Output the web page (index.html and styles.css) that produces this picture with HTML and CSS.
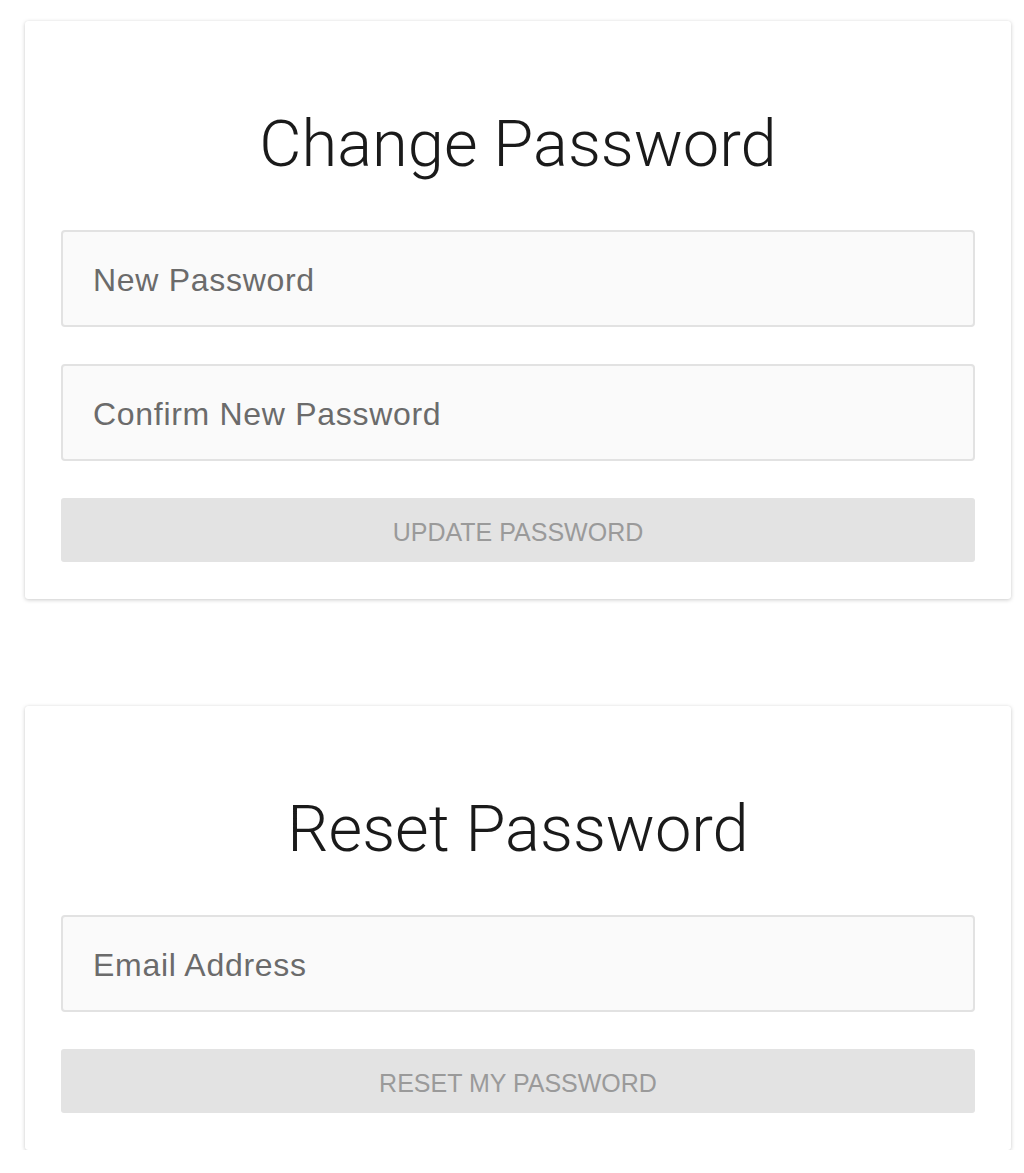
FILE: index.html
```html
<!DOCTYPE html>
<html lang="en">
<head>
<meta charset="utf-8">
<title>Password</title>
<link rel="stylesheet" href="styles.css">
</head>
<body>
<main class="page">
  <form class="card">
    <h1 class="card-title">Change Password</h1>
    <input class="field" type="password" placeholder="New Password">
    <input class="field" type="password" placeholder="Confirm New Password">
    <button class="btn" type="button" disabled>UPDATE PASSWORD</button>
  </form>
  <form class="card">
    <h1 class="card-title">Reset Password</h1>
    <input class="field" type="email" placeholder="Email Address">
    <button class="btn" type="button" disabled>RESET MY PASSWORD</button>
  </form>
</main>
</body>
</html>
```
FILE: styles.css
```css
html, body {
  margin: 0;
  padding: 0;
  background: #ffffff;
}
.page {
  display: flex;
  flex-direction: column;
  gap: 107px;
  width: 986px;
  padding: 21px 0 0 25px;
}
.card {
  display: flex;
  flex-direction: column;
  gap: 37px;
  background: #fff;
  border-radius: 3px;
  box-shadow: 0 1px 4px rgba(0, 0, 0, 0.2), 0 0 1px rgba(0, 0, 0, 0.08);
  padding: 36px 36px 37px 36px;
  margin: 0;
}
.card-title {
  margin: 47px 0 9px;
  text-align: center;
  font-family: Roboto, "Liberation Sans", sans-serif;
  font-weight: 300;
  font-size: 65px;
  line-height: 80px;
  color: #1a1a1a;
}
.field {
  box-sizing: border-box;
  height: 97px;
  width: 100%;
  margin: 0;
  padding: 4px 30px 0;
  background: #fafafa;
  border: 2px solid #e2e2e2;
  border-radius: 4px;
  font-family: "Liberation Sans", Arial, sans-serif;
  font-size: 32px;
  letter-spacing: 0.7px;
  color: #666;
  outline: none;
}
.field::placeholder {
  color: #6b6b6b;
  opacity: 1;
}
.btn {
  height: 64px;
  width: 100%;
  border: 0;
  border-radius: 3px;
  background: #e3e3e3;
  color: #9a9a9a;
  font-family: "Liberation Sans", Arial, sans-serif;
  font-size: 25px;
  padding: 4px 0 0;
}
```
